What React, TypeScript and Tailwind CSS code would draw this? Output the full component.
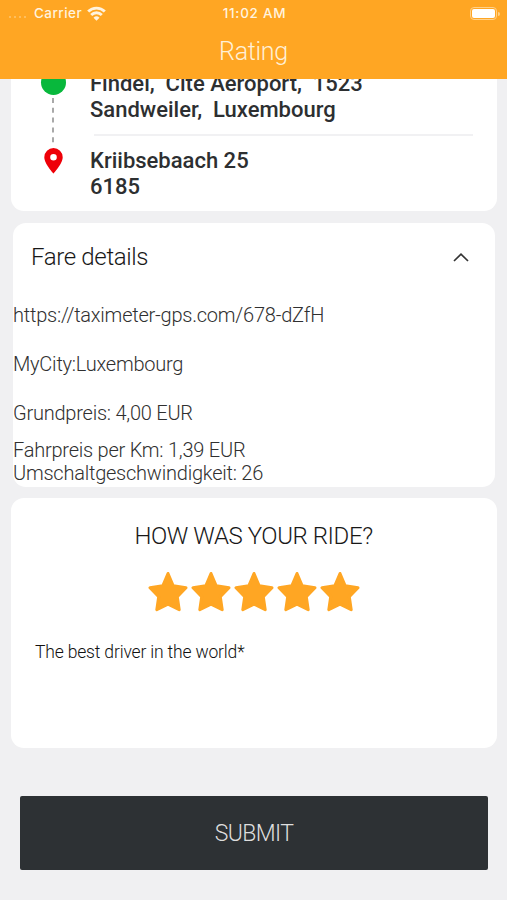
import React from "react";

function StatusBar() {
  return (
    <div className="grid h-[26px] grid-cols-3 items-center pl-[9px] pr-[7px] pt-px font-['Inter',sans-serif] text-[13.500px] font-medium text-[#fff3df]">
      <div className="flex items-center">
        <div className="mt-[7px] flex w-[25px] gap-[3px]">
          {[0, 1, 2, 3].map((dot) => (
            <span key={dot} className="size-[2px] rounded-full bg-[#ffc670]" />
          ))}
        </div>
        <span className="tracking-[0.450px]">Carrier</span>
        <svg className="ml-[5px] h-[15px] w-[19px]" viewBox="0 0 19 15" fill="none" stroke="currentColor" strokeWidth="2.900">
          <path d="M1.200 5.500a11.800 11.800 0 0 1 16.600 0M4.200 9a7.500 7.500 0 0 1 10.600 0" />
          <path d="M9.500 14.800 6.500 11.800a4.300 4.300 0 0 1 6 0z" fill="currentColor" stroke="none" />
        </svg>
      </div>
      <span className="text-center tracking-[0.700px]">11:02 AM</span>
      <div className="flex items-center justify-end gap-px">
        <span className="flex h-[13px] w-[27px] rounded-[4px] border border-[#ffd18a] p-px">
          <span className="flex-1 rounded-[2px] bg-white" />
        </span>
        <span className="h-[4px] w-[2px] rounded-r-full bg-[#ffd18a]" />
      </div>
    </div>
  );
}

function Header() {
  return (
    <header className="h-[79px] shrink-0 bg-[#ffa623]">
      <StatusBar />
      <h1 className="pt-px text-center text-[25px] font-light leading-[50px] tracking-[-0.300px] text-[#fff0d6]">Rating</h1>
    </header>
  );
}

function RouteCard() {
  return (
    <section className="mx-[10.500px] flex h-[132px] shrink-0 overflow-hidden rounded-b-[13px] bg-white pl-[30px]">
      <div className="flex w-[25px] flex-col items-center">
        <span className="-mt-[9px] size-[25px] shrink-0 rounded-full bg-[#08b83c]" />
        <svg className="mt-[3px] h-[48px] w-[2px] shrink-0" viewBox="0 0 2 48">
          <path d="M1 0V48" stroke="#a9a9a9" strokeWidth="2" strokeDasharray="5 4.800" />
        </svg>
        <svg className="mt-[2px] h-[26px] w-[19px] shrink-0" viewBox="0 0 19 26">
          <path
            fill="#ee0008"
            fillRule="evenodd"
            d="M9.500 0A9.200 9.200 0 0 0 .3 9.200C.3 15.700 9.500 25.500 9.500 25.500S18.700 15.700 18.700 9.200A9.200 9.200 0 0 0 9.500 0ZM9.500 6A3.300 3.300 0 1 1 9.500 12.600A3.300 3.300 0 0 1 9.500 6Z"
          />
        </svg>
      </div>
      <div className="ml-[24.500px] flex-1 whitespace-pre text-[22px] font-medium leading-[26px] text-[#2d2f31]">
        <p className="-mt-[8px]">{"Findel,  Cité Aéroport,  1523\nSandweiler,  Luxembourg"}</p>
        <hr className="ml-1 mr-6 mt-[11px] border-0 border-t-2 border-[#f1f1f3]" />
        <p className="mt-[12px]">{"Kriibsebaach 25\n6185"}</p>
      </div>
    </section>
  );
}

function FareCard() {
  return (
    <section className="mx-[12.500px] mt-[12px] flex h-[264px] shrink-0 flex-col rounded-[13px] bg-white text-[20px] font-light leading-[23px] tracking-[-0.230px] text-[#303030]">
      <div className="flex h-[68px] items-center justify-between pl-[18.500px] pr-[26px]">
        <h2 className="text-[24px] leading-[28px] tracking-[-0.350px] text-[#181818]">Fare details</h2>
        <svg className="h-[9px] w-[16px]" viewBox="0 0 16 9" fill="none" stroke="#333" strokeWidth="1.700">
          <path d="M1 8 8 1.200 15 8" />
        </svg>
      </div>
      <p className="mt-[13px] pl-[0.500px]">https://taximeter-gps.com/678-dZfH</p>
      <p className="mt-[26px] pl-[0.500px]">MyCity:Luxembourg</p>
      <p className="mt-[26px] pl-[0.500px]">Grundpreis: 4,00 EUR</p>
      <p className="mt-[14px] pl-[0.500px]">Fahrpreis per Km: 1,39 EUR</p>
      <p className="pl-[0.500px]">Umschaltgeschwindigkeit: 26</p>
    </section>
  );
}

function Star() {
  return (
    <svg className="h-[41px] w-[40px]" viewBox="0 0 40 41">
      <path
        d="M20 2.500 25.200 14.800 38 16.800 29.300 25.600 31.200 38.700 20 33.200 8.800 38.700 10.700 25.600 2 16.800 14.800 14.800Z"
        fill="#ffa623"
        stroke="#ffa623"
        strokeWidth="3"
        strokeLinejoin="round"
      />
    </svg>
  );
}

function RatingCard() {
  return (
    <section className="mx-[10.500px] mt-[11px] h-[250px] shrink-0 rounded-[13px] bg-white">
      <h2 className="pt-[24px] text-center text-[24px] font-light leading-[28px] tracking-[-0.420px] text-[#181818]">HOW WAS YOUR RIDE?</h2>
      <div className="mt-[21px] flex justify-center gap-[3px]">
        {[1, 2, 3, 4, 5].map((star) => (
          <Star key={star} />
        ))}
      </div>
      <p className="ml-[24.500px] mt-[30px] text-[17.500px] font-light leading-[20px] tracking-[-0.170px] text-[#111]">The best driver in the world*</p>
    </section>
  );
}

export default function App() {
  return (
    <main className="flex h-[900px] w-[507px] flex-col overflow-hidden bg-[#f0f0f2] font-['Roboto',sans-serif]">
      <Header />
      <RouteCard />
      <FareCard />
      <RatingCard />
      <button className="ml-[20px] mr-[19px] mt-[48px] h-[74px] shrink-0 rounded-[2px] bg-[#2d3134] pt-[2px] text-[23px] font-light tracking-[-0.600px] text-[#dedede]">
        SUBMIT
      </button>
    </main>
  );
}
